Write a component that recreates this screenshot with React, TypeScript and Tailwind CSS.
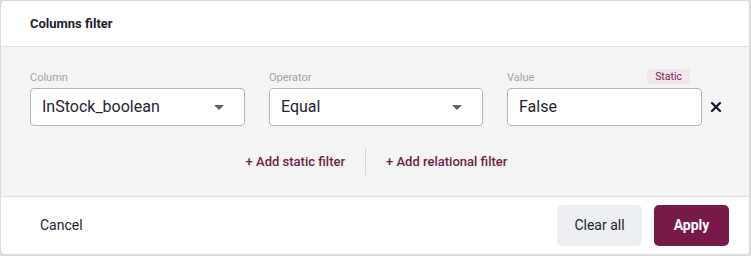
import { X } from 'lucide-react';

function Caret() {
  return (
    <svg className="w-[10px] h-[5px] text-[#5f6368]" viewBox="0 0 10 5" fill="currentColor">
      <path d="M0 0h10L5 5z" />
    </svg>
  );
}

function Field({ label, value, width, select, badge }: { label: string; value: string; width: string; select?: boolean; badge?: string }) {
  return (
    <div className={`flex flex-col ${width}`}>
      <div className="flex items-end justify-between h-[18px] mb-[4px]">
        <span className="text-[11px] leading-[13px] text-[#a3a3a3]">{label}</span>
        {badge && (
          <span className="mr-[12px] px-[8px] h-[15px] leading-[15px] rounded-[3px] bg-[#f3e5ec] text-[10.5px] text-[#7b2250]">
            {badge}
          </span>
        )}
      </div>
      <div className="h-[38px] bg-white border border-[#b5b5b5] rounded-[4px] flex items-center justify-between pl-[11px] pr-[20px]">
        <span className="text-[16px] text-[#1f2430]">{value}</span>
        {select && <Caret />}
      </div>
    </div>
  );
}

export default function App() {
  return (
    <div className="w-[751px] h-[256px] bg-[#dcdcdc] p-[1px] pr-[2px]" style={{ fontFamily: 'Roboto, "Liberation Sans", sans-serif' }}>
      <div className="h-[253px] bg-white rounded-[4px] overflow-hidden flex flex-col">
        {/* header */}
        <div className="h-[46px] flex items-center px-[29px] border-b border-[#e3e3e3]">
          <h1 className="text-[13px] font-bold text-[#1b1d2e]">Columns filter</h1>
        </div>

        {/* body */}
        <div className="h-[150px] bg-[#f4f4f4] border-b border-[#dedede] pt-[19px] pl-[29px]">
          <div className="flex items-end gap-[24px]">
            <Field label="Column" value="InStock_boolean" width="w-[215px]" select />
            <Field label="Operator" value="Equal" width="w-[214px]" select />
            <div className="flex items-end gap-[6px]">
              <Field label="Value" value="False" width="w-[195px]" badge="Static" />
              <div className="h-[38px] flex items-center">
                <X className="w-[16px] h-[16px] text-[#1b1d2e]" strokeWidth={3.5} />
              </div>
            </div>
          </div>
          <div className="flex items-center justify-center mt-[22px] mr-[26px] text-[13px] font-medium text-[#6c1e45]">
            <button className="px-[20px]">+ Add static filter</button>
            <div className="w-px h-[27px] bg-[#d4d4d4]" />
            <button className="px-[20px]">+ Add relational filter</button>
          </div>
        </div>

        {/* footer */}
        <div className="flex-1 flex items-center justify-between pl-[39px] pr-[20px]">
          <button className="text-[14px] text-[#1b1d2e]">Cancel</button>
          <div className="flex items-center gap-[12px]">
            <button className="h-[41px] w-[85px] rounded-[5px] bg-[#eceef1] text-[14px] text-[#1b1d2e]">Clear all</button>
            <button className="h-[41px] w-[75px] rounded-[5px] bg-[#771a4a] text-[14px] font-bold text-white">Apply</button>
          </div>
        </div>
      </div>
    </div>
  );
}
